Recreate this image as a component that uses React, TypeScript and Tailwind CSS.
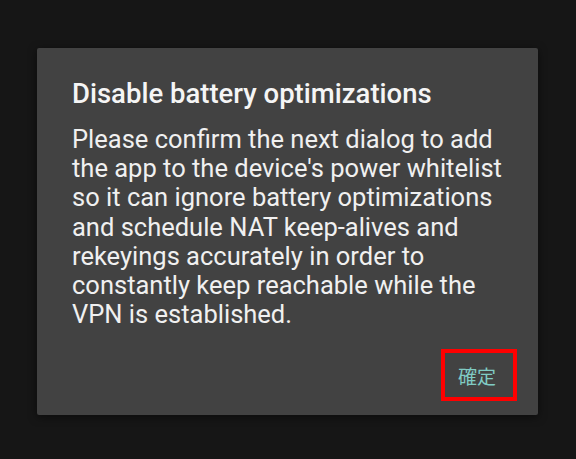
export default function App() {
  return (
    <div className="min-h-[459px] w-[576px] bg-[#161616] pt-[48px] pl-[37px]" style={{ fontFamily: "Roboto, 'Noto Sans', sans-serif" }}>
      <div className="flex h-[367px] w-[501px] flex-col rounded-[2px] bg-[#424242] pl-[35px] pr-[21px] pt-[30px] shadow-[0_2px_8px_rgba(0,0,0,0.5)]">
        <h1 className="whitespace-nowrap text-[27.5px] font-medium leading-[32px] text-[#f5f5f5]">Disable battery optimizations</h1>
        <p className="mt-[15px] w-[440px] text-[25.5px] leading-[29.2px] text-[#f0f0f0]">
          Please confirm the next dialog to add the app to the device's power whitelist so it can ignore battery optimizations and schedule NAT keep-alives and rekeyings accurately in order to constantly keep reachable while the VPN is established.
        </p>
        <div className="mt-[20px] flex justify-end">
          <div className="flex h-[52px] w-[76px] items-center justify-center border-4 border-[#ff0000] pr-[4px]">
            <span className="text-[19px] leading-none text-[#80cbc4]" style={{ fontFamily: "'Noto Sans CJK JP', 'Noto Sans CJK SC', sans-serif" }}>確定</span>
          </div>
        </div>
      </div>
    </div>
  );
}
